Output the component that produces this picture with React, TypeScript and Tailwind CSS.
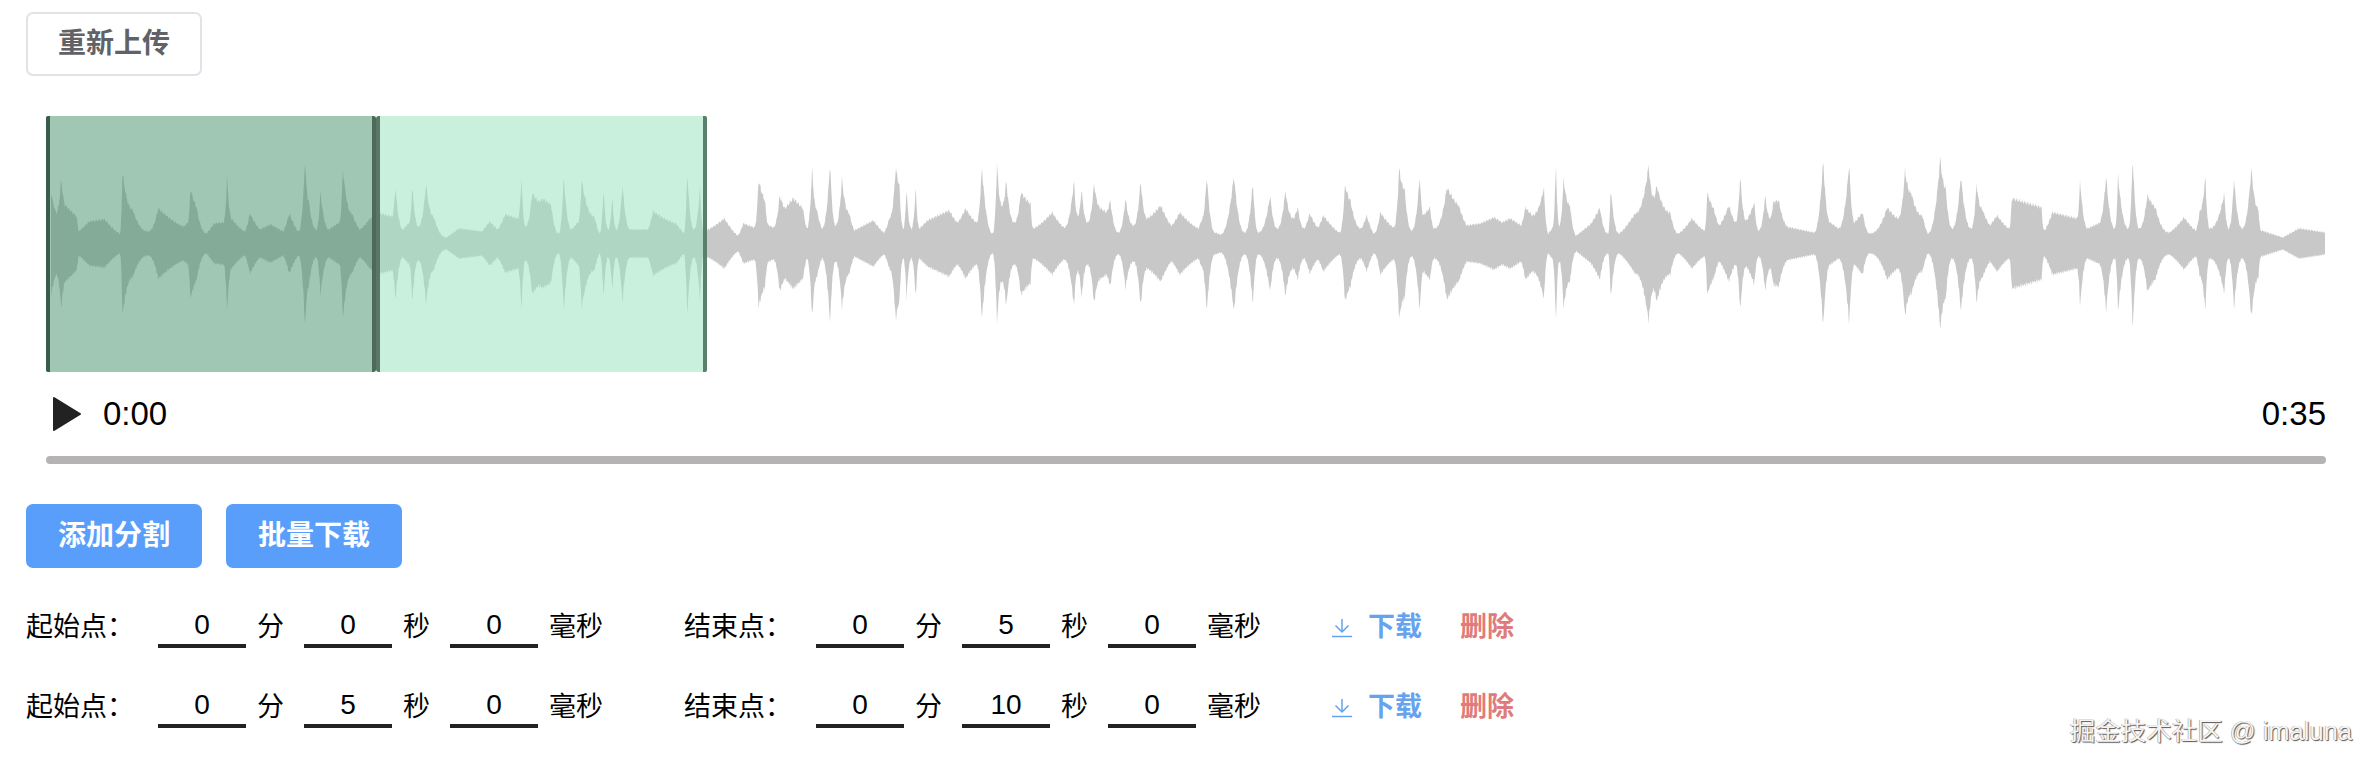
import type { ReactNode } from "react";

// 波形の包絡線: [x(px), 振幅(px)]。中心線からの高さで持つ
const PART_A = [[100,50],[110,30],[120,64],[130,36],[150,26],[155,11],[175,21],[205,23],[235,9],[240,71],[260,33],[290,11],[310,34],[360,16],[368,20],[373,54],[385,36],[405,9],[420,19],[438,20],[445,66],[455,23],[480,11],[490,29],[510,13],[530,18],[555,11],[567,29],[585,11],[598,83],[605,43],[620,13],[628,51],[645,13],[665,20],[672,74],[690,29],[705,13],[725,24],[745,29],[768,26],[775,56],[790,13],[802,20],[808,58],[820,16],[835,59],[850,26],[875,5],[900,14],[945,11],[960,21],[975,13],[990,28],[1015,24],[1022,66],[1030,16],[1043,49],[1055,41],[1065,43],[1080,38],[1095,9],[1105,66],[1120,13],[1133,20],[1140,63],[1165,26],[1175,9],[1183,53],[1192,13],[1200,46],[1208,13],[1220,58],[1235,13],[1270,13],[1280,31],[1325,19],[1340,9],[1347,71],[1360,13],[1372,56],[1380,9]];
const PART_B = [[10,12],[45,24],[70,7],[80,19],[100,15],[108,62],[120,42],[127,17],[135,15],[147,47],[157,34],[172,44],[190,34],[197,14],[207,75],[215,34],[225,14],[240,79],[250,17],[262,64],[275,30],[285,12],[320,22],[340,10],[350,25],[361,75],[368,57],[375,14],[381,54],[390,14],[398,55],[405,14],[420,22],[460,32],[475,20],[490,34],[510,20],[520,75],[540,9],[548,79],[557,37],[565,62],[580,20],[592,50],[610,39],[615,14],[650,30],[672,15],[690,62],[697,27],[704,54],[715,20],[727,59],[740,34],[750,30],[757,42],[772,10],[785,44],[800,17],[813,62],[825,24],[850,37],[870,17],[885,30],[920,14],[925,22],[935,67],[950,10],[960,8],[985,67],[1005,10],[1020,60],[1030,10],[1052,47],[1065,14],[1080,52],[1095,24],[1103,35],[1115,14],[1125,29],[1140,15],[1150,27],[1180,10],[1190,57],[1200,42],[1220,14],[1230,27],[1243,9],[1255,30],[1280,15],[1290,75],[1300,54],[1313,12],[1328,67],[1335,27],[1347,35],[1355,14],[1378,55],[1400,37],[1415,17],[1440,19],[1465,25],[1480,20],[1495,24],[1515,17],[1523,35],[1535,27],[1557,55]];
const PART_C = [[45,9],[52,14],[59,80],[65,17],[73,64],[85,37],[97,7],[120,17],[140,35],[155,9],[160,55],[175,9],[205,29],[230,77],[240,45],[245,57],[270,30],[285,9],[310,24],[333,12],[338,50],[350,34],[360,17],[378,37],[390,20],[399,67],[410,22],[425,40],[433,12],[445,47],[455,24],[460,40],[470,42],[490,15],[535,10],[552,82],[565,20],[580,14],[600,79],[610,20],[625,30],[638,9],[670,35],[690,24],[703,72],[715,49],[735,27],[745,9],[768,85],[778,55],[790,14],[806,67],[825,14],[835,59],[845,34],[860,17],[873,27],[895,14],[900,44],[955,35],[960,12],[975,30],[1020,24],[1026,62],[1040,14],[1060,19],[1074,67],[1090,14],[1096,67],[1115,14],[1123,85],[1135,14],[1150,47],[1165,35],[1190,10],[1218,25],[1240,12],[1247,32],[1257,67],[1265,14],[1292,49],[1300,14],[1310,64],[1325,14],[1342,74],[1355,34],[1360,12],[1400,5],[1430,14],[1478,10]];

const envelope = [
  ...PART_A.map(([x, a]) => [x / 1.96, a]),
  ...PART_B.map(([x, a]) => [700 + x / 1.845, a]),
  ...PART_C.map(([x, a]) => [1524 + x / 1.845, a]),
];

// 山に向かって急に立ち上がるよう、差が大きい区間は凹カーブで補間する
function ampAt(x: number) {
  for (let i = 0; i < envelope.length - 1; i++) {
    const [x0, a0] = envelope[i];
    const [x1, a1] = envelope[i + 1];
    if (x >= x0 && x <= x1) {
      const t = (x - x0) / (x1 - x0 || 1);
      const low = Math.min(a0, a1);
      const high = Math.max(a0, a1);
      const toPeak = a1 > a0 ? t : 1 - t;
      const p = high - low > 20 ? 2.2 : high - low > 10 ? 1.3 : 1;
      return low + (high - low) * Math.pow(toPeak, p);
    }
  }
  return 10;
}

const ORIGIN_X = 46;
const MID_Y = 127.5;

function buildWavePath() {
  const start = envelope[0][0];
  const end = envelope[envelope.length - 1][0];
  const top: string[] = [];
  const bottom: string[] = [];
  for (let x = start; x <= end; x += 0.5) {
    const a = ampAt(x) + 1;
    const amount = 0.5 + a * 0.05;
    const n1 = (Math.sin(x * 2.3) * 0.6 + Math.sin(x * 5.1) * 0.5) * amount;
    const n2 = (Math.sin(x * 3.1) * 0.6 + Math.sin(x * 4.3) * 0.5) * amount;
    const px = (x - ORIGIN_X).toFixed(1);
    top.push(`${px},${(MID_Y - a - n1).toFixed(1)}`);
    bottom.unshift(`${px},${(MID_Y + a + n2).toFixed(1)}`);
  }
  return `M${top.join("L")}L${bottom.join("L")}Z`;
}

const wavePath = buildWavePath();

function Waveform() {
  return (
    <div className="relative mt-[40px] ml-5 h-64 w-[2280px]">
      <svg width="2280" height="256" viewBox="0 0 2280 256" className="block">
        <path d={wavePath} fill="#c8c8c8" />
      </svg>
      {/* 分割リージョン */}
      <div className="absolute top-0 left-0 h-64 w-[330px] rounded-[2px] bg-[rgba(61,141,102,0.49)]">
        <div className="absolute top-0 left-0 h-64 w-[3.5px] rounded-l-[2px] bg-[#3a5c4b]" />
        <div className="absolute top-0 right-0 h-64 w-1 rounded-r-[3px] bg-[#4c6a5a]" />
      </div>
      <div className="absolute top-0 left-[330px] h-64 w-[331px] rounded-[2px] bg-[rgba(151,226,189,0.53)]">
        <div className="absolute top-0 left-0 h-64 w-1 rounded-l-[3px] bg-[#5a7666]" />
        <div className="absolute top-0 right-0 h-64 w-1 rounded-r-[2px] bg-[#5a7f6d]" />
      </div>
    </div>
  );
}

function Player() {
  return (
    <div className="ml-5 w-[2280px]">
      <div className="mt-[24.5px] flex h-[34px] items-center justify-between text-[33px] text-black">
        <div className="flex items-center">
          <svg width="30" height="36" viewBox="0 0 30 36" className="ml-[6px]">
            <path d="M2 2 L28 18 L2 34 Z" fill="#222222" stroke="#222222" strokeWidth="2" strokeLinejoin="round" />
          </svg>
          <span className="ml-[21px]">0:00</span>
        </div>
        <span>0:35</span>
      </div>
      <div className="mt-[25px] h-2 w-full rounded-full bg-[#b5b3b3]" />
    </div>
  );
}

function TimeInput({ value }: { value: string }) {
  return (
    <input
      readOnly
      value={value}
      className="h-11 w-[88px] border-b-[4px] border-[#222222] pt-[2px] text-center text-[28px] text-black outline-none"
    />
  );
}

function TimeGroup({ label, values, width }: { label: string; values: string[]; width: string }) {
  return (
    <div className={`flex items-center ${width}`}>
      <span className="mt-1 w-[132px]">{label}</span>
      <TimeInput value={values[0]} />
      <span className="mt-1 ml-[11px] w-[47px]">分</span>
      <TimeInput value={values[1]} />
      <span className="mt-1 ml-[11px] w-[47px]">秒</span>
      <TimeInput value={values[2]} />
      <span className="mt-1 ml-[11px]">毫秒</span>
    </div>
  );
}

function DownloadIcon() {
  return (
    <svg width="22" height="20" viewBox="0 0 22 20" fill="none" stroke="#66a3ee" strokeWidth="1.5">
      <path d="M11 1 V13.5 M4.5 7.5 L11 14 L17.5 7.5 M1 18.5 H21" />
    </svg>
  );
}

function SplitRow({ start, end }: { start: string[]; end: string[] }) {
  return (
    <div className="mt-9 flex h-11 items-center text-[27px] leading-none text-black">
      <TimeGroup label="起始点：" values={start} width="w-[658px]" />
      <TimeGroup label="结束点：" values={end} width="w-[647px]" />
      <div className="mt-1 flex items-center font-bold">
        <DownloadIcon />
        <span className="ml-[15px] text-[#66a3ee]">下载</span>
        <span className="ml-[38px] text-[#e07b7b]">删除</span>
      </div>
    </div>
  );
}

function PrimaryButton({ children }: { children: ReactNode }) {
  return (
    <button className="h-16 w-[176px] rounded-[7px] bg-[#5a9efc] text-[28px] font-bold text-white">
      {children}
    </button>
  );
}

export default function App() {
  return (
    <div className="relative h-[768px] w-[2374px] overflow-hidden bg-white pt-3 pl-[26px] [font-family:'Liberation_Sans','Noto_Sans_CJK_SC',sans-serif]">
      <button className="h-16 w-[176px] rounded-[7px] border-2 border-[#e1e3e8] text-[28px] font-bold text-[#606266]">
        重新上传
      </button>
      <Waveform />
      <Player />
      <div className="mt-10 flex gap-6">
        <PrimaryButton>添加分割</PrimaryButton>
        <PrimaryButton>批量下载</PrimaryButton>
      </div>
      <div className="mt-[1.5px]">
        <SplitRow start={["0", "0", "0"]} end={["0", "5", "0"]} />
        <SplitRow start={["0", "5", "0"]} end={["0", "10", "0"]} />
      </div>
      {/* 透かし */}
      <span className="absolute top-[712px] right-[22px] text-[25.5px] whitespace-nowrap text-[#f4f4f4] [text-shadow:1px_1px_1px_#555,-0.5px_-0.5px_0.5px_#999]">
        掘金技术社区 @ imaluna
      </span>
    </div>
  );
}
